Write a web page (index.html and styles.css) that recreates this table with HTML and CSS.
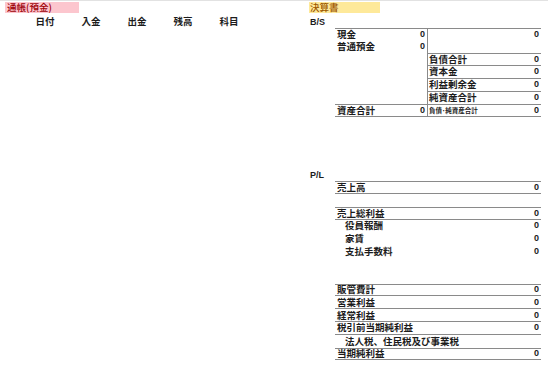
FILE: index.html
```html
<!DOCTYPE html>
<html lang="ja">
<head>
<meta charset="utf-8">
<title>通帳・決算書</title>
<link rel="stylesheet" href="styles.css">
</head>
<body>
<div class="sheet">
  <section class="ledger">
    <div class="row"><div class="tag tag-bad">通帳(預金)</div></div>
    <div class="row ledger-head">
      <span>日付</span><span>入金</span><span>出金</span><span>残高</span><span>科目</span>
    </div>
  </section>

  <section class="report">
    <div class="row"><div class="tag tag-neutral">決算書</div></div>
    <div class="row"><span class="section-label">B/S</span></div>

    <div class="row bs">
      <div class="cell left bt"><span>現金</span><span class="num">0</span></div>
      <div class="cell right bt"><span></span><span class="num">0</span></div>
    </div>
    <div class="row bs">
      <div class="cell left"><span>普通預金</span><span class="num">0</span></div>
      <div class="cell right"></div>
    </div>
    <div class="row bs">
      <div class="cell left"></div>
      <div class="cell right bt bb"><span>負債合計</span><span class="num">0</span></div>
    </div>
    <div class="row bs">
      <div class="cell left"></div>
      <div class="cell right bb"><span>資本金</span><span class="num">0</span></div>
    </div>
    <div class="row bs">
      <div class="cell left"></div>
      <div class="cell right bb"><span>利益剰余金</span><span class="num">0</span></div>
    </div>
    <div class="row bs">
      <div class="cell left"></div>
      <div class="cell right"><span>純資産合計</span><span class="num">0</span></div>
    </div>
    <div class="row bs">
      <div class="cell left bt bb"><span>資産合計</span><span class="num">0</span></div>
      <div class="cell right bt bb"><span class="small">負債･純資産合計</span><span class="num">0</span></div>
    </div>

    <div class="row"></div>
    <div class="row"></div>
    <div class="row"></div>
    <div class="row"></div>

    <div class="row"><span class="section-label">P/L</span></div>
    <div class="row pl"><div class="cell wide bt bb"><span>売上高</span><span class="num">0</span></div></div>
    <div class="row"></div>
    <div class="row pl"><div class="cell wide bt bb"><span>売上総利益</span><span class="num">0</span></div></div>
    <div class="row pl"><div class="cell wide indent"><span>役員報酬</span><span class="num">0</span></div></div>
    <div class="row pl"><div class="cell wide indent"><span>家賃</span><span class="num">0</span></div></div>
    <div class="row pl"><div class="cell wide indent"><span>支払手数料</span><span class="num">0</span></div></div>
    <div class="row"></div>
    <div class="row"></div>
    <div class="row pl"><div class="cell wide bt bb"><span>販管費計</span><span class="num">0</span></div></div>
    <div class="row pl"><div class="cell wide bb"><span>営業利益</span><span class="num">0</span></div></div>
    <div class="row pl"><div class="cell wide bb"><span>経常利益</span><span class="num">0</span></div></div>
    <div class="row pl"><div class="cell wide bb"><span>税引前当期純利益</span><span class="num">0</span></div></div>
    <div class="row pl"><div class="cell wide indent"><span>法人税、住民税及び事業税</span><span></span></div></div>
    <div class="row pl"><div class="cell wide bt bb"><span>当期純利益</span><span class="num">0</span></div></div>
  </section>
</div>
</body>
</html>
```

FILE: styles.css
```css
html, body {
  margin: 0;
  padding: 0;
  background: #ffffff;
}

body {
  font-family: "Noto Sans CJK JP", "Noto Sans", "Liberation Sans", sans-serif;
  font-size: 9.5px;
  font-weight: 700;
  color: #1c1c1c;
}

.sheet {
  display: flex;
  border-top: 1px solid #e2e2e2;
  width: 548px;
  height: 368px;
  overflow: hidden;
}

.row {
  height: 12.8px;
  line-height: 12.8px;
  white-space: nowrap;
}

/* left: bank book */
.ledger {
  width: 309px;
  flex: none;
}

.tag {
  height: 11px;
  line-height: 11px;
  margin-top: 1px;
  padding-left: 2px;
  font-weight: 500;
}

.ledger .tag {
  width: 72px;
  margin-left: 5px;
}

.tag-bad {
  background: #fcc6ce;
  color: #9c0006;
}

.tag-neutral {
  background: #fee99a;
  color: #9c5700;
  width: 70px;
  padding-left: 1px;
}

.ledger-head {
  display: grid;
  grid-template-columns: repeat(5, 46px);
  padding-left: 22px;
  text-align: center;
}

/* right: statements */
.report {
  width: 232px;
  flex: none;
}

.section-label {
  padding-left: 1px;
  font-family: "Liberation Sans", "Noto Sans CJK JP", sans-serif;
  font-size: 9px;
}

.bs {
  display: grid;
  grid-template-columns: 26px 92px 114px;
}

.pl {
  display: grid;
  grid-template-columns: 26px 206px;
}

.cell {
  box-sizing: border-box;
  height: 12.8px;
  display: flex;
  justify-content: space-between;
  align-items: center;
  padding: 0 2px 1px;
  line-height: 10px;
}

.cell span {
  display: block;
  height: 10px;
  line-height: 10px;
}

.cell .num {
  font-family: "Liberation Sans", sans-serif;
  font-size: 9px;
}

.cell.left {
  grid-column: 2;
}

.cell.right {
  grid-column: 3;
  border-left: 1px solid #8a8a8a;
  padding-left: 1px;
}

.cell.wide {
  grid-column: 2;
}

.cell.indent {
  padding-left: 10px;
}

.bt {
  border-top: 1px solid #8a8a8a;
}

.bb {
  border-bottom: 1px solid #8a8a8a;
}

.small {
  font-size: 6.5px;
}
```
